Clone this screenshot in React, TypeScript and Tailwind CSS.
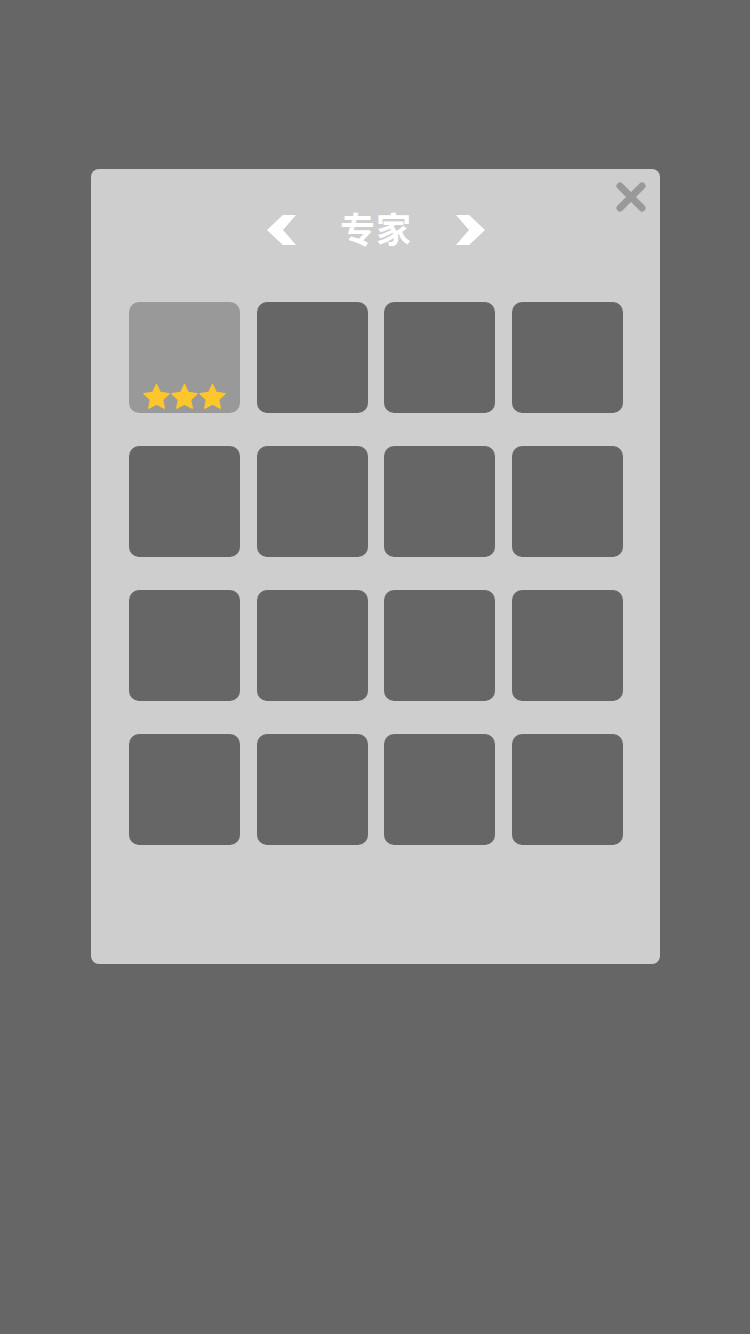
import React from "react";

function Star() {
  return (
    <svg width="29" height="28" viewBox="0 0 24 23">
      <path
        d="M12 1.2l3.1 6.6 7.2.9-5.3 5 1.4 7.1L12 17.3l-6.4 3.5 1.4-7.1-5.3-5 7.2-.9z"
        fill="#fcc72c"
        stroke="#fcc72c"
        strokeWidth="1.2"
        strokeLinejoin="round"
      />
    </svg>
  );
}

function Chevron({ dir }: { dir: "left" | "right" }) {
  const pts =
    dir === "left"
      ? "17,0 28,0 15,15 28,30 17,30 1,15"
      : "12,0 1,0 14,15 1,30 12,30 28,15";
  return (
    <svg width="29" height="30" viewBox="0 0 29 30">
      <polygon points={pts} fill="#ffffff" strokeLinejoin="round" stroke="#ffffff" strokeWidth="1.5" />
    </svg>
  );
}

export default function App() {
  const tiles = Array.from({ length: 16 }, (_, i) => i);
  return (
    <div
      className="w-[750px] h-[1334px] bg-[#666666] pt-[169px] pl-[91px]"
      style={{ fontFamily: '"Noto Sans CJK SC", "Noto Sans", sans-serif' }}
    >
      <div className="relative w-[569px] h-[795px] bg-[#cecece] rounded-[8px] pl-[38px] pt-[46px]">
        <button className="absolute right-[13px] top-[12px] w-[32px] h-[32px] flex items-center justify-center">
          <svg width="32" height="32" viewBox="0 0 32 32">
            <path d="M5 5L27 27M27 5L5 27" stroke="#999999" strokeWidth="7" strokeLinecap="round" />
          </svg>
        </button>
        <div className="flex items-center justify-center w-[494px] h-[30px] gap-[44px]">
          <Chevron dir="left" />
          <div className="relative top-[-2px] text-white font-bold text-[35px] leading-[30px] tracking-[1px]">专家</div>
          <Chevron dir="right" />
        </div>
        <div className="mt-[57px] grid grid-cols-[111px_111px_111px_111px] gap-x-[16.67px] gap-y-[33px]">
          {tiles.map((i) =>
            i === 0 ? (
              <div key={i} className="w-[111px] h-[111px] rounded-[10px] bg-[#999999] flex items-end justify-center pb-[2px]">
                <div className="flex -space-x-[1px]">
                  <Star />
                  <Star />
                  <Star />
                </div>
              </div>
            ) : (
              <div key={i} className="w-[111px] h-[111px] rounded-[10px] bg-[#666666]" />
            )
          )}
        </div>
      </div>
    </div>
  );
}
